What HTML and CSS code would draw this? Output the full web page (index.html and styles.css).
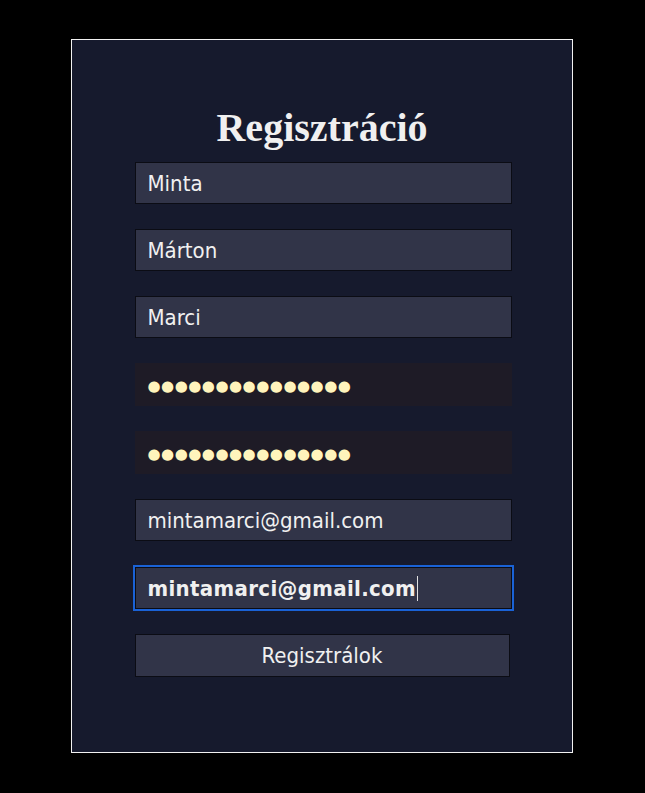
FILE: index.html
```html
<!DOCTYPE html>
<html lang="hu">
<head>
<meta charset="utf-8">
<title>Regisztráció</title>
<link rel="stylesheet" href="styles.css">
</head>
<body>
<div class="card">
  <h1 class="title">Regisztráció</h1>
  <form class="form">
    <input class="field" type="text" value="Minta">
    <input class="field" type="text" value="Márton">
    <input class="field" type="text" value="Marci">
    <div class="field pw"><span class="dots">●●●●●●●●●●●●●●●</span></div>
    <div class="field pw"><span class="dots">●●●●●●●●●●●●●●●</span></div>
    <input class="field" type="text" value="mintamarci@gmail.com">
    <div class="field focus"><span class="bold">mintamarci@gmail.com</span><span class="caret"></span></div>
    <button class="btn" type="button">Regisztrálok</button>
  </form>
</div>
</body>
</html>
```

FILE: styles.css
```css
html, body {
  margin: 0;
  padding: 0;
  background: #000;
}
body {
  padding-top: 39px;
  padding-left: 71px;
}
.card {
  box-sizing: border-box;
  width: 502px;
  height: 714px;
  border: 1px solid #f2f2f2;
  background: #161a2d;
  display: flex;
  flex-direction: column;
  align-items: center;
}
.title {
  margin: 65px 0 0 0;
  font-family: "Liberation Serif", serif;
  font-weight: bold;
  font-size: 40px;
  line-height: 46px;
  color: #f0f0f0;
  width: 100%;
  text-align: center;
}
.form {
  margin-top: 11px;
  display: flex;
  flex-direction: column;
  gap: 25px;
  width: 377px;
  margin-left: 2px;
}
.field {
  box-sizing: border-box;
  width: 377px;
  height: 42px;
  margin: 0;
  padding: 0 12px;
  border: 1px solid #0b0c14;
  background: #313448;
  color: #f0f0f0;
  font-family: "DejaVu Sans Condensed", "DejaVu Sans", sans-serif;
  font-stretch: condensed;
  font-size: 22px;
  outline: none;
  display: flex;
  align-items: center;
}
.pw {
  background: #1e1b26;
  border-color: #1e1b26;
  height: 43px;
  padding-top: 3px;
}
.dots {
  color: #fff4bc;
  font-family: "DejaVu Sans", sans-serif;
  font-stretch: normal;
  font-size: 15px;
  letter-spacing: 0.5px;
}
.focus {
  width: 381px;
  height: 46px;
  margin: -1px 0 -2px -2px;
  border: 2px solid #1a62d6;
  padding-left: 13px;
  box-shadow: inset 0 0 0 1px #0b0c14;
}
.bold {
  font-weight: bold;
  letter-spacing: 0.35px;
}
.caret {
  display: inline-block;
  width: 1px;
  height: 25px;
  background: #e0e0e0;
  margin-left: 1px;
}
.btn {
  box-sizing: border-box;
  width: 375px;
  height: 43px;
  margin: 0;
  border: 1px solid #0b0c14;
  background: #313448;
  color: #f0f0f0;
  font-family: "DejaVu Sans Condensed", "DejaVu Sans", sans-serif;
  font-stretch: condensed;
  font-size: 22px;
  padding: 0;
}
```
